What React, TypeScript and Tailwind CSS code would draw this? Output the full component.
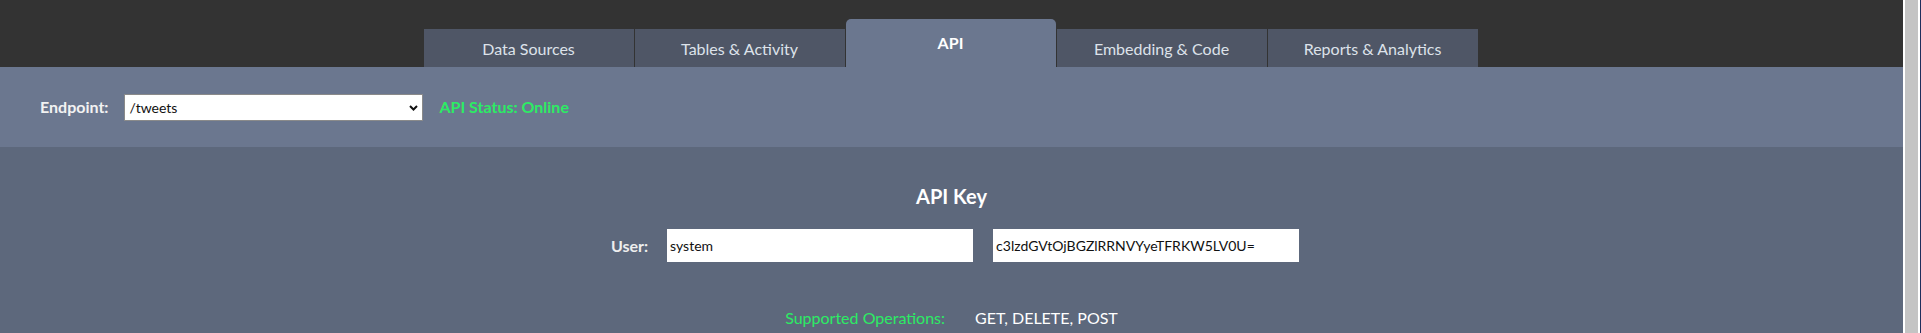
import { useState } from "react"

const tabs = [
    "Data Sources",
    "Tables & Activity",
    "API",
    "Embedding & Code",
    "Reports & Analytics",
]

export default function App() {

    const [active, setActive] = useState("API")
    const [endpoint, setEndpoint] = useState("/tweets")

    return (
        <div className="flex h-screen w-full overflow-hidden font-['Lato','Open_Sans',sans-serif]">

            <div className="flex flex-1 flex-col min-w-0">

                {/* tab strip */}
                <header className="h-[67px] shrink-0 bg-[#333333] flex items-end justify-center gap-px pr-[2px]">
                    {tabs.map((tab) => (
                        <button
                            key={tab}
                            onClick={() => setActive(tab)}
                            className={
                                active === tab
                                    ? "w-[210px] h-[48px] rounded-t-[5px] bg-[#6b778f] text-white font-bold text-[16px] flex items-center justify-center"
                                    : "w-[210px] h-[38px] bg-[#4f5666] text-[#dde2ea] text-[16px] flex items-center justify-center pt-[2px]"
                            }
                        >
                            {tab}
                        </button>
                    ))}
                </header>

                {/* endpoint bar */}
                <div className="h-[80px] shrink-0 bg-[#6b778f] flex items-center pl-[40px]">
                    <span className="text-[16px] font-bold text-[#f2f2f2]">
                        Endpoint:
                    </span>

                    <div className="relative ml-[16px]">
                        <select
                            value={endpoint}
                            onChange={(e) => setEndpoint(e.target.value)}
                            className="appearance-none w-[299px] h-[27px] bg-white border border-[#8a8a8a] pl-[4px] text-[14px] text-[#111] font-['Lato',sans-serif] outline-none"
                        >
                            <option>/tweets</option>
                            <option>/users</option>
                            <option>/search</option>
                        </select>
                        <svg
                            className="pointer-events-none absolute right-[5px] top-[11px]"
                            width="9"
                            height="6"
                            viewBox="0 0 9 6"
                        >
                            <path d="M1 1 L4.5 4.5 L8 1" fill="none" stroke="#111" strokeWidth="2" />
                        </svg>
                    </div>

                    <span className="ml-[16px] text-[16px] font-bold text-[#2cec64]">
                        API Status: Online
                    </span>
                </div>

                {/* api key area */}
                <main className="flex-1 bg-[#5d687c] flex flex-col items-center pt-[37px]">
                    <h2 className="text-[20px] leading-[24px] font-bold text-white">
                        API Key
                    </h2>

                    <div className="mt-[21px] flex items-center pl-[7px]">
                        <span className="text-[16px] font-bold text-[#eeeeee] mr-[19px]">
                            User:
                        </span>
                        <input
                            readOnly
                            value="system"
                            className="w-[306px] h-[33px] bg-white pl-[3px] text-[14px] text-[#111] font-['Lato',sans-serif] outline-none"
                        />
                        <input
                            readOnly
                            value="c3lzdGVtOjBGZlRRNVYyeTFRKW5LV0U="
                            className="ml-[20px] w-[306px] h-[33px] bg-white pl-[3px] text-[14px] text-[#111] font-['Lato',sans-serif] outline-none"
                        />
                    </div>

                    <div className="mt-[46px] flex items-center gap-[30px] text-[16px] leading-[20px]">
                        <span className="text-[#2cec64]">Supported Operations:</span>
                        <span className="text-white">GET, DELETE, POST</span>
                    </div>
                </main>

            </div>

            {/* scroll rail */}
            <div className="w-[18px] shrink-0 flex">
                <div className="w-[2px] bg-white" />
                <div className="w-[13px] bg-[#c4c4c4]" />
                <div className="w-[2px] bg-white" />
                <div className="w-[1px] bg-[#1f2d5c]" />
            </div>

        </div>
    )
}
